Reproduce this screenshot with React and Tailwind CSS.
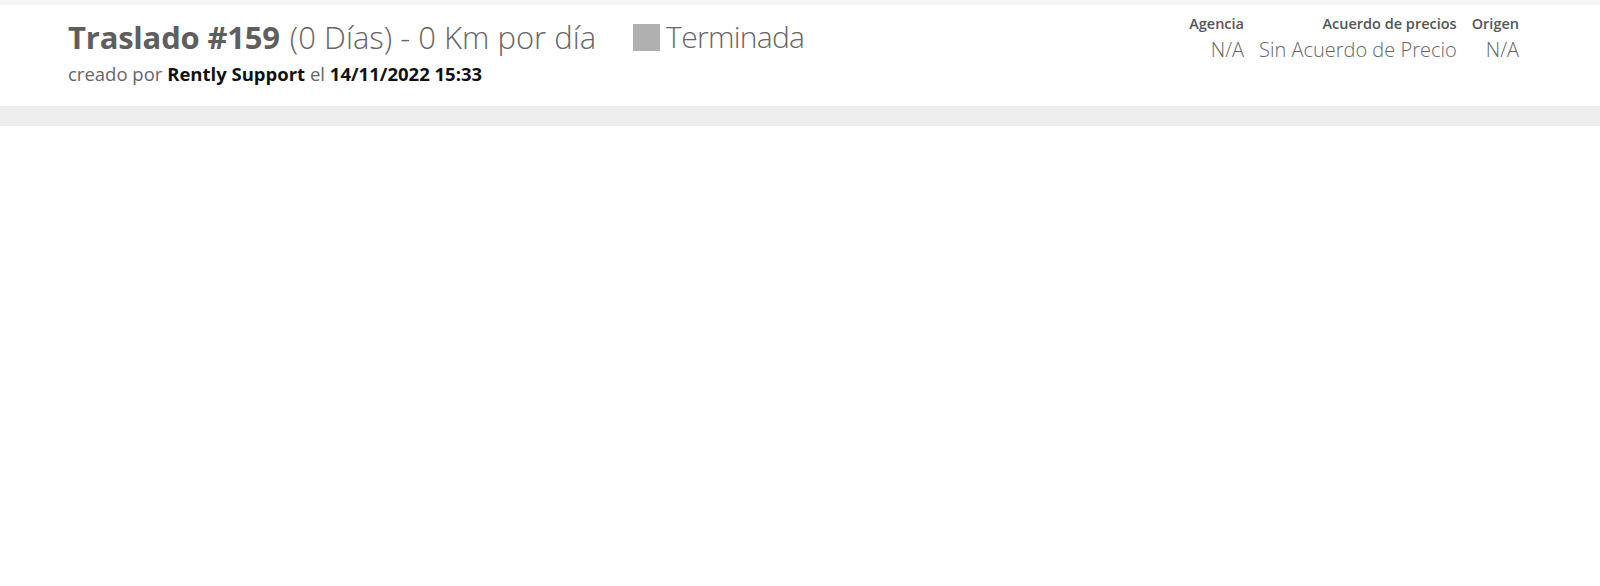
export default function App() {
  return (
    <div className="w-[1600px] h-[586px] bg-white" style={{ fontFamily: '"Open Sans", "Noto Sans", sans-serif' }}>
      <div className="h-[5px] bg-[#f5f5f5]" />
      <div className="h-[101px] flex justify-between pl-[68px] pr-[81px]">
        <div className="pt-[12px]">
          <div className="flex items-center whitespace-nowrap">
            <span className="text-[31px] leading-[40px] font-bold text-[#5e5e5e] tracking-[-0.2px]">Traslado #159</span>
            <span className="text-[31px] leading-[40px] font-light text-[#666] ml-[10px]">(0 Días) - 0 Km por día</span>
            <span className="ml-[37px] w-[27px] h-[27px] bg-[#b0b0b0] inline-block" />
            <span className="text-[30px] leading-[40px] font-light text-[#666] ml-[6px] tracking-[-0.7px]">Terminada</span>
          </div>
          <div className="text-[18.5px] leading-[22px] text-[#666] mt-[6px] whitespace-nowrap">
            creado por <span className="font-bold text-[#111]">Rently Support</span> el <span className="font-bold text-[#111]">14/11/2022 15:33</span>
          </div>
        </div>
        <div className="pt-[10px] flex gap-[15px] whitespace-nowrap">
          <div className="flex flex-col items-end">
            <span className="text-[14.5px] leading-[18px] font-semibold text-[#555]">Agencia</span>
            <span className="text-[20px] leading-[28px] font-light text-[#666] mt-[3px]">N/A</span>
          </div>
          <div className="flex flex-col items-end">
            <span className="text-[14.5px] leading-[18px] font-semibold text-[#555]">Acuerdo de precios</span>
            <span className="text-[20px] leading-[28px] font-light text-[#666] mt-[3px]">Sin Acuerdo de Precio</span>
          </div>
          <div className="flex flex-col items-end">
            <span className="text-[14.5px] leading-[18px] font-semibold text-[#555]">Origen</span>
            <span className="text-[20px] leading-[28px] font-light text-[#666] mt-[3px]">N/A</span>
          </div>
        </div>
      </div>
      <div className="h-[20px] bg-[#eeeeee]" />
    </div>
  );
}
